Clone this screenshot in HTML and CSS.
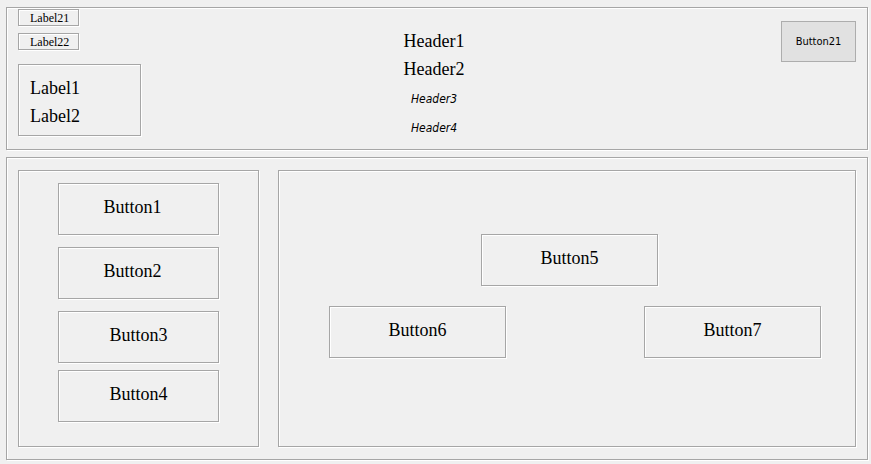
FILE: index.html
```html
<!DOCTYPE html>
<html lang="en">
<head>
  <meta charset="utf-8">
  <title>Panels</title>
  <link rel="stylesheet" href="styles.css">
</head>
<body>
  <header class="group top">
    <div class="labels">
      <p class="group tag">Label21</p>
      <p class="group tag">Label22</p>
      <div class="group label-box">
        <p>Label1</p>
        <p>Label2</p>
      </div>
    </div>
    <div class="headers">
      <h1>Header1</h1>
      <h2>Header2</h2>
      <div class="notes">
        <p>Header3</p>
        <p>Header4</p>
      </div>
    </div>
    <button class="push" type="button">Button21</button>
  </header>
  <main class="group bottom">
    <nav class="group side">
      <button class="group tile shifted" type="button">Button1</button>
      <button class="group tile shifted" type="button">Button2</button>
      <div class="pair">
        <button class="group tile" type="button">Button3</button>
        <button class="group tile" type="button">Button4</button>
      </div>
    </nav>
    <section class="group content">
      <div class="row single">
        <button class="group tile wide" type="button">Button5</button>
      </div>
      <div class="row">
        <button class="group tile wide" type="button">Button6</button>
        <button class="group tile wide" type="button">Button7</button>
      </div>
    </section>
  </main>
</body>
</html>
```
FILE: styles.css
```css
* {
  box-sizing: border-box;
  margin: 0;
}

body {
  display: flex;
  flex-direction: column;
  gap: 7px;
  min-height: 100vh;
  padding: 7px 3px 4px 6px;
  background: #f0f0f0;
  color: #000;
  font: 18px/28px "Liberation Serif", serif;
}

/* Etched frame: grey line with a white highlight */
.group {
  border: 1px solid #a6a6a6;
  box-shadow: 1px 1px 0 #fff, inset 1px 1px 0 #fff;
}

.top {
  display: grid;
  grid-template-columns: 1fr auto 1fr;
  align-items: start;
  padding: 1px 11px 6px;
}

.labels {
  display: flex;
  flex-direction: column;
  align-items: flex-start;
  gap: 7px;
}

.tag {
  width: 61px;
  padding: 1px 0 0 11px;
  font-size: 12px;
  line-height: 14px;
}

.label-box {
  width: 123px;
  margin-top: 7px;
  padding: 9px 11px 5px;
}

.headers {
  padding: 18px 6px 0 0;
  text-align: center;
}

.headers h1,
.headers h2 {
  font-size: 18px;
  font-weight: normal;
}

.notes {
  margin-top: 2px;
  font: italic 12px/29px "DejaVu Sans Condensed", "DejaVu Sans", sans-serif;
}

.push {
  justify-self: end;
  width: 75px;
  height: 41px;
  margin-top: 12px;
  padding: 0;
  border: 1px solid #adadad;
  background: #e1e1e1;
  color: #000;
  font: 11px "DejaVu Sans Condensed", "DejaVu Sans", sans-serif;
}

.bottom {
  display: flex;
  flex: 1;
  gap: 19px;
  padding: 12px 11px;
}

.side {
  display: flex;
  flex-direction: column;
  gap: 12px;
  width: 241px;
  padding: 12px 39px 24px;
}

.pair {
  display: flex;
  flex-direction: column;
  gap: 7px;
}

.tile {
  height: 52px;
  padding: 0 0 4px;
  border-radius: 0;
  background: transparent;
  color: inherit;
  font: inherit;
}

.shifted {
  padding-right: 12px;
}

.content {
  display: flex;
  flex: 1;
  flex-direction: column;
  gap: 20px;
  padding: 63px 34px 24px 50px;
}

.row {
  display: flex;
  justify-content: space-between;
}

.single {
  justify-content: center;
  padding-right: 11px;
}

.wide {
  width: 177px;
}
```
